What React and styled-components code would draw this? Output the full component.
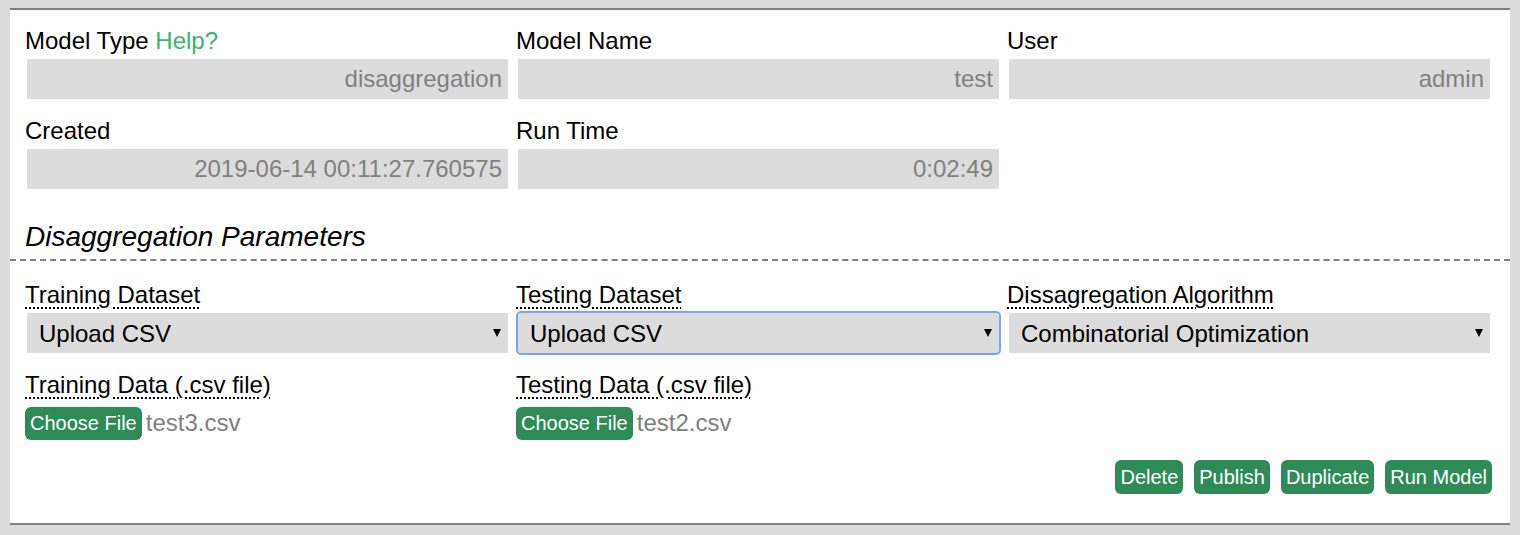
import React from "react";
import styled, { createGlobalStyle, css } from "styled-components";

const GlobalStyle = createGlobalStyle`
  html, body {
    margin: 0;
    padding: 0;
  }
  body {
    background: #dcdcdc;
    padding: 8px 10px 10px;
    font-family: "Liberation Sans", Arial, sans-serif;
    color: #000;
  }
`;

const Panel = styled.section`
  background: #fff;
  border-top: 2px solid #808080;
  border-bottom: 2px solid #808080;
  padding: 17px 0 29px;
`;

const FieldGrid = styled.div`
  display: grid;
  grid-template-columns: repeat(3, 485px);
  column-gap: 6px;
  row-gap: 18px;
  padding: 0 15px;
`;

const Field = styled.div`
  display: flex;
  flex-direction: column;
  min-width: 0;
`;

const Label = styled.div`
  font-size: 24px;
  line-height: 28px;
  height: 28px;
  margin-bottom: 4px;
  white-space: nowrap;
`;

const HelpLink = styled.a`
  color: #3cb371;
  text-decoration: none;
  cursor: pointer;
`;

const Hint = styled.span`
  text-decoration: underline dotted #000;
  text-decoration-thickness: 2px;
  text-underline-offset: 4px;
  cursor: help;
`;

const ReadOnlyValue = styled.div`
  margin: 0 2px;
  height: 40px;
  line-height: 39px;
  background: #dcdcdc;
  color: #808080;
  font-size: 24px;
  text-align: right;
  padding: 0 6px;
  white-space: nowrap;
  overflow: hidden;
`;

const SectionHeading = styled.h2`
  margin: 31px 0 20px;
  padding: 1px 15px 6px;
  font-size: 28px;
  line-height: 32px;
  font-weight: normal;
  font-style: italic;
  border-bottom: 2px dashed #808080;
`;

const SelectWrap = styled.div`
  position: relative;
  margin: 0 2px;

  /* dropdown caret */
  &::after {
    content: "";
    position: absolute;
    right: 7px;
    top: 16px;
    width: 0;
    height: 0;
    border-left: 4px solid transparent;
    border-right: 4px solid transparent;
    border-top: 8px solid #000;
    pointer-events: none;
  }
`;

const Select = styled.select`
  appearance: none;
  -webkit-appearance: none;
  display: block;
  width: 100%;
  height: 40px;
  border: none;
  border-radius: 0;
  background: #dcdcdc;
  color: #000;
  font-family: inherit;
  font-size: 24px;
  padding: 0 24px 0 12px;
  margin: 0;
  outline: none;

  ${(p) =>
    p.$focused &&
    css`
      outline: 2px solid #7aa6ee;
      outline-offset: 0;
      border-radius: 3px;
    `}
`;

const FileRow = styled.div`
  display: flex;
  align-items: center;
  height: 40px;
  gap: 4px;
`;

const GreenButton = styled.button`
  height: ${(p) => (p.$tall ? "34px" : "33px")};
  padding: 0 ${(p) => (p.$tall ? "5px" : "5px")};
  border: none;
  border-radius: 6px;
  background: #2e8b57;
  color: #fff;
  font-family: inherit;
  font-size: 20px;
  line-height: 1;
  cursor: pointer;
  white-space: nowrap;
`;

const FileName = styled.span`
  color: #808080;
  font-size: 24px;
`;

const ActionBar = styled.div`
  display: flex;
  justify-content: flex-end;
  gap: 11px;
  padding: 17px 18px 0 15px;
`;

const infoFields = [
  { label: "Model Type", help: true, value: "disaggregation" },
  { label: "Model Name", value: "test" },
  { label: "User", value: "admin" },
  { label: "Created", value: "2019-06-14 00:11:27.760575" },
  { label: "Run Time", value: "0:02:49" },
];

const selectFields = [
  { label: "Training Dataset", value: "Upload CSV", options: ["Upload CSV"] },
  { label: "Testing Dataset", value: "Upload CSV", options: ["Upload CSV"], focused: true },
  {
    label: "Dissagregation Algorithm",
    value: "Combinatorial Optimization",
    options: ["Combinatorial Optimization", "Factorial Hidden Markov Model"],
  },
];

const fileFields = [
  { label: "Training Data (.csv file)", file: "test3.csv" },
  { label: "Testing Data (.csv file)", file: "test2.csv" },
];

const actions = ["Delete", "Publish", "Duplicate", "Run Model"];

export default function App() {
  return (
    <>
      <GlobalStyle />
      <Panel>
        <FieldGrid>
          {infoFields.map((f) => (
            <Field key={f.label}>
              <Label>
                {f.label}
                {f.help && (
                  <>
                    {" "}
                    <HelpLink>Help?</HelpLink>
                  </>
                )}
              </Label>
              <ReadOnlyValue>{f.value}</ReadOnlyValue>
            </Field>
          ))}
        </FieldGrid>

        <SectionHeading>Disaggregation Parameters</SectionHeading>

        <FieldGrid>
          {selectFields.map((f) => (
            <Field key={f.label}>
              <Label>
                <Hint>{f.label}</Hint>
              </Label>
              <SelectWrap>
                <Select defaultValue={f.value} $focused={f.focused}>
                  {f.options.map((o) => (
                    <option key={o}>{o}</option>
                  ))}
                </Select>
              </SelectWrap>
            </Field>
          ))}
          {fileFields.map((f) => (
            <Field key={f.label}>
              <Label>
                <Hint>{f.label}</Hint>
              </Label>
              <FileRow>
                <GreenButton type="button">Choose File</GreenButton>
                <FileName>{f.file}</FileName>
              </FileRow>
            </Field>
          ))}
        </FieldGrid>

        <ActionBar>
          {actions.map((a) => (
            <GreenButton key={a} type="button" $tall>
              {a}
            </GreenButton>
          ))}
        </ActionBar>
      </Panel>
    </>
  );
}
